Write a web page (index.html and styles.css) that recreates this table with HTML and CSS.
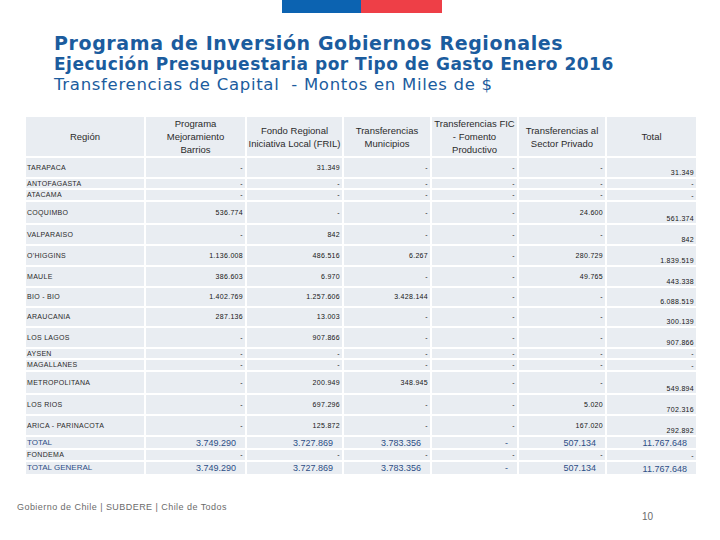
FILE: index.html
```html
<!DOCTYPE html>
<html lang="es">
<head>
<meta charset="utf-8">
<title>Programa de Inversión Gobiernos Regionales</title>
<link rel="stylesheet" href="styles.css">
</head>
<body>
<div class="flag"><span class="blue"></span><span class="red"></span></div>
<header class="titles">
  <h1>Programa de Inversión Gobiernos Regionales</h1>
  <h2>Ejecución Presupuestaria por Tipo de Gasto Enero 2016</h2>
  <p>Transferencias de Capital &nbsp;- Montos en Miles de $</p>
</header>
<table class="data">
  <colgroup>
    <col class="c1"><col class="c2"><col class="c3"><col class="c4"><col class="c5"><col class="c6"><col class="c7">
  </colgroup>
  <thead>
    <tr>
      <th>Región</th>
      <th>Programa<br>Mejoramiento<br>Barrios</th>
      <th>Fondo Regional<br>Iniciativa Local (FRIL)</th>
      <th>Transferencias<br>Municipios</th>
      <th>Transferencias FIC<br>- Fomento<br>Productivo</th>
      <th>Transferencias al<br>Sector Privado</th>
      <th>Total</th>
    </tr>
  </thead>
  <tbody>
    <tr class="md"><td class="reg">TARAPACA</td><td>-</td><td>31.349</td><td>-</td><td>-</td><td>-</td><td class="tc">31.349</td></tr>
    <tr class="xxs"><td class="reg">ANTOFAGASTA</td><td>-</td><td>-</td><td>-</td><td>-</td><td>-</td><td class="tc">-</td></tr>
    <tr class="xs"><td class="reg">ATACAMA</td><td>-</td><td>-</td><td>-</td><td>-</td><td>-</td><td class="tc">-</td></tr>
    <tr class="lg"><td class="reg">COQUIMBO</td><td>536.774</td><td>-</td><td>-</td><td>-</td><td>24.600</td><td class="tc">561.374</td></tr>
    <tr class="md"><td class="reg">VALPARAISO</td><td>-</td><td>842</td><td>-</td><td>-</td><td>-</td><td class="tc">842</td></tr>
    <tr class="md"><td class="reg">O'HIGGINS</td><td>1.136.008</td><td>486.516</td><td>6.267</td><td>-</td><td>280.729</td><td class="tc">1.839.519</td></tr>
    <tr class="md"><td class="reg">MAULE</td><td>386.603</td><td>6.970</td><td>-</td><td>-</td><td>49.765</td><td class="tc">443.338</td></tr>
    <tr class="sm"><td class="reg">BIO - BIO</td><td>1.402.769</td><td>1.257.606</td><td>3.428.144</td><td>-</td><td>-</td><td class="tc">6.088.519</td></tr>
    <tr class="sm"><td class="reg">ARAUCANIA</td><td>287.136</td><td>13.003</td><td>-</td><td>-</td><td>-</td><td class="tc">300.139</td></tr>
    <tr class="md"><td class="reg">LOS LAGOS</td><td>-</td><td>907.866</td><td>-</td><td>-</td><td>-</td><td class="tc">907.866</td></tr>
    <tr class="xxs"><td class="reg">AYSEN</td><td>-</td><td>-</td><td>-</td><td>-</td><td>-</td><td class="tc">-</td></tr>
    <tr class="xs"><td class="reg">MAGALLANES</td><td>-</td><td>-</td><td>-</td><td>-</td><td>-</td><td class="tc">-</td></tr>
    <tr class="lg"><td class="reg">METROPOLITANA</td><td>-</td><td>200.949</td><td>348.945</td><td>-</td><td>-</td><td class="tc">549.894</td></tr>
    <tr class="md"><td class="reg">LOS RIOS</td><td>-</td><td>697.296</td><td>-</td><td>-</td><td>5.020</td><td class="tc">702.316</td></tr>
    <tr class="md"><td class="reg">ARICA - PARINACOTA</td><td>-</td><td>125.872</td><td>-</td><td>-</td><td>167.020</td><td class="tc">292.892</td></tr>
    <tr class="sum"><td class="reg">TOTAL</td><td>3.749.290</td><td>3.727.869</td><td>3.783.356</td><td>-</td><td>507.134</td><td class="tc">11.767.648</td></tr>
    <tr class="xs"><td class="reg">FONDEMA</td><td>-</td><td>-</td><td>-</td><td>-</td><td>-</td><td class="tc">-</td></tr>
    <tr class="sum grand"><td class="reg">TOTAL GENERAL</td><td>3.749.290</td><td>3.727.869</td><td>3.783.356</td><td>-</td><td>507.134</td><td class="tc">11.767.648</td></tr>
  </tbody>
</table>
<footer class="foot">
  <span class="credit">Gobierno de Chile | SUBDERE | Chile de Todos</span>
  <span class="page">10</span>
</footer>
</body>
</html>
```
FILE: styles.css
```css
body {
  margin: 0;
  background: #ffffff;
  font-family: "Liberation Sans", Arial, sans-serif;
}

.flag {
  display: flex;
  padding-left: 282px;
}
.flag .blue {
  width: 79px;
  height: 13px;
  background: #0c63b1;
}
.flag .red {
  width: 81px;
  height: 13px;
  background: #ee3f47;
}

.titles {
  margin: 19px 0 0 54px;
  color: #1b5c9e;
}
.titles h1 {
  margin: 0;
  font: bold 19px/22px "DejaVu Sans", sans-serif;
  letter-spacing: 0.6px;
}
.titles h2 {
  margin: 0;
  font: bold 17px/21px "DejaVu Sans", sans-serif;
  letter-spacing: 0.5px;
}
.titles p {
  margin: 0;
  font: 16.5px/20px "DejaVu Sans", sans-serif;
  letter-spacing: 0.7px;
}

.data {
  margin: 20px 0 0 24px;
  border-collapse: separate;
  border-spacing: 2px;
  table-layout: fixed;
  width: 674px;
}
.c1 { width: 118px; }
.c2 { width: 99px; }
.c3 { width: 95px; }
.c4 { width: 86px; }
.c5 { width: 85px; }
.c6 { width: 86px; }
.c7 { width: 89px; }

.data th,
.data td {
  background: #e9edf2;
  padding: 0;
}
.data th {
  height: 37px;
  font-size: 9.5px;
  line-height: 13px;
  font-weight: normal;
  color: #2b2b2b;
  text-align: center;
  vertical-align: middle;
}
.data td {
  font-size: 7px;
  line-height: 8px;
  color: #151515;
  text-align: right;
  padding-right: 2px;
  vertical-align: middle;
  letter-spacing: 0.3px;
  white-space: nowrap;
}
.data td.reg {
  text-align: left;
  padding: 0 0 0 1px;
  color: #2a2a2a;
}
.data td.tc {
  vertical-align: bottom;
  line-height: 9px;
}

.data tr.xxs td { height: 9px; }
.data tr.xs td { height: 10px; }
.data tr.sm td { height: 18px; }
.data tr.md td { height: 19px; }
.data tr.lg td { height: 21px; }
.data tr.sum td {
  height: 11px;
  font-size: 9px;
  line-height: 10px;
  color: #2d4e86;
  letter-spacing: 0;
  padding-right: 9px;
}
.data tr.grand td { height: 12px; }
.data tr.sum td.reg {
  font-size: 8px;
  padding-right: 0;
}

.foot {
  display: flex;
  justify-content: space-between;
  align-items: flex-start;
  margin-top: 25px;
  padding: 0 67px 0 17px;
}
.foot .credit {
  font-size: 9px;
  line-height: 12px;
  letter-spacing: 0.45px;
  color: #6b6b6b;
}
.foot .page {
  margin-top: 10px;
  font-size: 10px;
  line-height: 12px;
  color: #6b6b6b;
}
```
